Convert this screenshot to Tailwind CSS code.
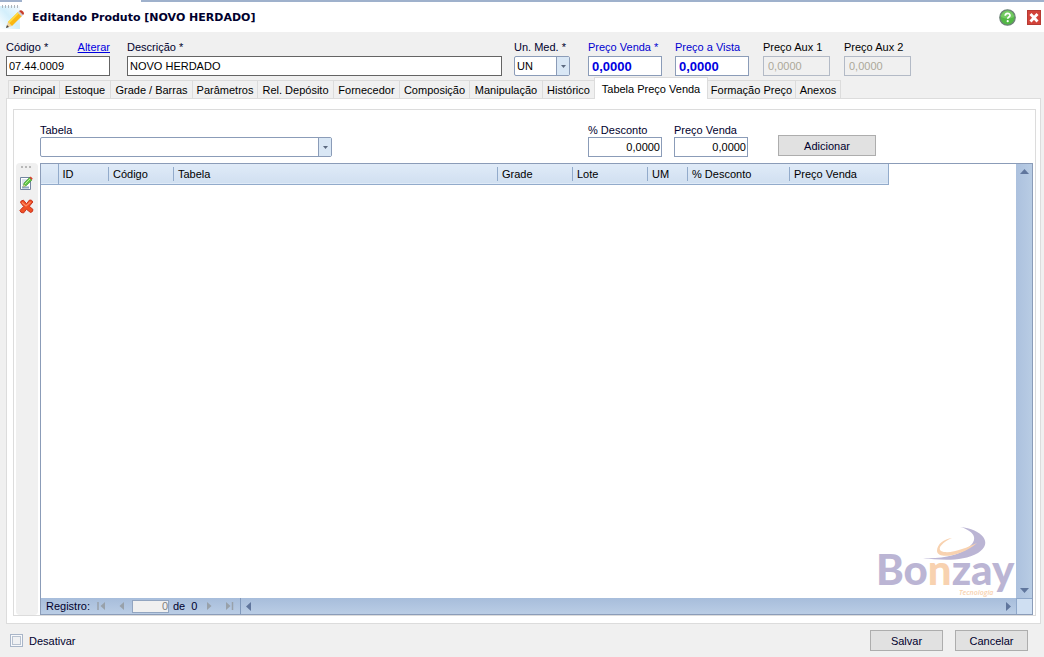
<!DOCTYPE html>
<html lang="pt-BR">
<head>
<meta charset="utf-8">
<title>Editando Produto</title>
<script src="https://cdn.jsdelivr.net/npm/@tailwindcss/browser@4"></script>
</head>
<body class="flex min-h-screen flex-col bg-[#f0f0f0] font-['Liberation_Sans',Arial,sans-serif] text-[11px] leading-[14px] text-[#00002d]">
  <div class="flex h-[2px] shrink-0 bg-[#9fb1cc]"><div class="ml-[22px] w-[119px] bg-white"></div></div>
  <header class="flex h-[30px] shrink-0 items-center bg-white pr-[3px]">
    <svg class="h-[30px] w-[32px] shrink-0" viewBox="0 0 32 30" aria-hidden="true">
      <defs><linearGradient id="sky" x1="0" y1="1" x2="1" y2="0"><stop offset="0" stop-color="#fff"/><stop offset=".5" stop-color="#d3effb"/><stop offset="1" stop-color="#f4fbff"/></linearGradient></defs>
      <rect y="4" width="20" height="23" fill="url(#sky)"/>
      <path d="M2.500 3v3M5.500 3v3M8.500 3v3M11.500 3v3M14.500 3v3M17.500 3v3" stroke="#aeb4ba"/>
      <path d="M6 26l2-6 4 4z" fill="#f0d4a0"/><path d="M6 26l1-3 2 2z" fill="#444"/>
      <path d="M8 20L18 10l4 4-10 10z" fill="#fbb813"/><path d="M8 20L18 10l1.300 1.300-10 10z" fill="#ffdc45"/>
      <path d="M17.500 10.500l1.500-1.500 4 4-1.500 1.500z" fill="#ccd0d4"/><path d="M19 9q2-1.500 4 .5t0 3.500z" fill="#c83d2a"/>
    </svg>
    <h1 class="pt-[2px] font-['DejaVu_Sans',Verdana,sans-serif] text-[11px] font-bold">Editando Produto [NOVO HERDADO]</h1>
    <div class="ml-auto flex items-center gap-[11px]">
      <button type="button" aria-label="Ajuda"><svg class="block size-[17px]" viewBox="0 0 17 17"><circle cx="8.500" cy="8.500" r="7.700" fill="#52b845" stroke="#6d8078" stroke-width="1.300"/><path d="M2 8a6.500 6.500 0 0 1 13 0q-6 3-13 0z" fill="#8bd577" opacity=".6"/><path d="M6.200 6.800c0-3.200 4.800-3.200 4.800-.4 0 1.600-2.300 1.700-2.300 3.400" fill="none" stroke="#fff" stroke-width="1.700"/><circle cx="8.700" cy="12.200" r="1.100" fill="#fff"/></svg></button>
      <button type="button" aria-label="Fechar"><svg class="block h-[15px] w-[14px]" viewBox="0 0 14 15"><rect x=".5" y=".5" width="13" height="14" fill="#d2433a" stroke="#b63a33"/><path d="M3.500 4l7 7.500M10.500 4l-7 7.500" stroke="#fff" stroke-width="2.800"/></svg></button>
    </div>
  </header>

  <main class="flex grow flex-col px-[6px] pr-[3px] pt-[8px]">
    <div class="flex shrink-0">
      <div class="w-[104px]">
        <div class="flex justify-between"><label for="codigo">Código *</label><a href="#" class="text-[#0000e0] underline">Alterar</a></div>
        <input id="codigo" value="07.44.0009" class="mt-[2px] block h-[20px] w-full border border-[#646464] bg-white px-[2px] text-black">
      </div>
      <div class="ml-[17px] w-[375px]">
        <label for="desc" class="block">Descrição *</label>
        <input id="desc" value="NOVO HERDADO" class="mt-[2px] block h-[20px] w-full border border-[#646464] bg-white px-[2px] text-black">
      </div>
      <div class="ml-[12px] w-[56px]">
        <label for="um" class="block">Un. Med. *</label>
        <div class="relative mt-[2px]">
          <select id="um" class="block h-[20px] w-full appearance-none rounded-[2px] border border-[#8b9cb8] bg-white px-[2px] text-black"><option>UN</option></select>
          <span class="pointer-events-none absolute inset-y-px right-px flex w-[13px] items-center justify-center border-l border-[#8b9cb8] bg-[#d9e7f5]"><svg class="h-[3px] w-[5px]" viewBox="0 0 5 3"><path d="M0 0h5L2.500 3z" fill="#5c6a80"/></svg></span>
        </div>
      </div>
      <div class="ml-[18px] w-[74px]">
        <label for="pv" class="block whitespace-nowrap text-[#0000d0]">Preço Venda *</label>
        <input id="pv" value="0,0000" class="mt-[2px] block h-[20px] w-full border border-[#8b9cb8] bg-white px-[3px] text-[13px] font-bold text-[#0000e0]">
      </div>
      <div class="ml-[13px] w-[74px]">
        <label for="pav" class="block text-[#0000d0]">Preço a Vista</label>
        <input id="pav" value="0,0000" class="mt-[2px] block h-[20px] w-full border border-[#8b9cb8] bg-white px-[3px] text-[13px] font-bold text-[#0000e0]">
      </div>
      <div class="ml-[14px] w-[67px]">
        <label for="a1" class="block text-black">Preço Aux 1</label>
        <input id="a1" disabled value="0,0000" class="mt-[2px] block h-[20px] w-full border border-[#b3bac6] bg-[#f0f0f0] px-[4px] text-[#aca899]">
      </div>
      <div class="ml-[14px] w-[67px]">
        <label for="a2" class="block text-black">Preço Aux 2</label>
        <input id="a2" disabled value="0,0000" class="mt-[2px] block h-[20px] w-full border border-[#b3bac6] bg-[#f0f0f0] px-[4px] text-[#aca899]">
      </div>
    </div>

    <div role="tablist" class="mb-[-1px] ml-[2px] mt-px flex h-[22px] shrink-0 items-end text-black">
      <button role="tab" class="h-[19px] w-[51px] border-l border-t border-[#dcdcdc]">Principal</button>
      <button role="tab" class="h-[19px] w-[51px] border-l border-t border-[#dcdcdc]">Estoque</button>
      <button role="tab" class="h-[19px] w-[82px] border-l border-t border-[#dcdcdc]">Grade / Barras</button>
      <button role="tab" class="h-[19px] w-[65px] border-l border-t border-[#dcdcdc]">Parâmetros</button>
      <button role="tab" class="h-[19px] w-[76px] border-l border-t border-[#dcdcdc]">Rel. Depósito</button>
      <button role="tab" class="h-[19px] w-[66px] border-l border-t border-[#dcdcdc]">Fornecedor</button>
      <button role="tab" class="h-[19px] w-[70px] border-l border-t border-[#dcdcdc]">Composição</button>
      <button role="tab" class="h-[19px] w-[73px] border-l border-t border-[#dcdcdc]">Manipulação</button>
      <button role="tab" class="h-[19px] w-[52px] border-l border-t border-[#dcdcdc]">Histórico</button>
      <button role="tab" aria-selected="true" class="z-10 h-[22px] w-[114px] border border-b-0 border-[#dcdcdc] bg-white">Tabela Preço Venda</button>
      <button role="tab" class="h-[19px] w-[87px] border-t border-[#dcdcdc]">Formação Preço</button>
      <button role="tab" class="h-[19px] w-[46px] border-x border-t border-[#dcdcdc]">Anexos</button>
    </div>

    <section class="flex grow flex-col border border-[#dcdcdc] bg-white px-[6px] pb-[7px] pr-[4px] pt-[10px]">
      <div class="flex grow flex-col border border-[#dcdcdc] pl-[2px] pr-[2px] pt-[13px]">
        <form class="flex h-[40px] shrink-0 pl-[24px]">
          <div class="w-[292px]">
            <label for="tabela" class="block">Tabela</label>
            <div class="relative">
              <select id="tabela" class="block h-[20px] w-full appearance-none rounded-[2px] border border-[#8b9cb8] bg-white px-[2px] text-black"><option></option></select>
              <span class="pointer-events-none absolute inset-y-px right-px flex w-[13px] items-center justify-center border-l border-[#8b9cb8] bg-[#d9e7f5]"><svg class="h-[3px] w-[5px]" viewBox="0 0 5 3"><path d="M0 0h5L2.500 3z" fill="#5c6a80"/></svg></span>
            </div>
          </div>
          <div class="ml-[256px] w-[74px]">
            <label for="pd" class="block">% Desconto</label>
            <input id="pd" value="0,0000" class="block h-[20px] w-full border border-[#8b9cb8] bg-white px-px text-right text-black">
          </div>
          <div class="ml-[12px] w-[74px]">
            <label for="pv2" class="block">Preço Venda</label>
            <input id="pv2" value="0,0000" class="block h-[20px] w-full border border-[#8b9cb8] bg-white px-px text-right text-black">
          </div>
          <button type="button" class="ml-[30px] mt-[12px] h-[21px] w-[98px] border border-[#adadad] bg-[#e1e1e1]">Adicionar</button>
        </form>
        <div class="flex grow gap-[2px]">
          <div role="toolbar" class="flex w-[22px] shrink-0 flex-col items-center rounded bg-[#f0f0f0] pr-[2px] pt-[3px]">
            <svg class="h-[2px] w-[10px]" viewBox="0 0 10 2"><path d="M0 1h2M4 1h2M8 1h2" stroke="#b8b8b8" stroke-width="2"/></svg>
            <button type="button" aria-label="Editar" class="mt-[8px]"><svg class="block size-[14px]" viewBox="0 0 14 14"><path d="M1.500 1.500h10v12h-10z" fill="#fff" stroke="#7385a0"/><path d="M3 4h5M3 6h4M3 8h3" stroke="#b8c7da"/><path d="M3 11.500h7" stroke="#91a7c4" stroke-width="2"/><path d="M4 11l1-4 5.500-5.500 2.500 2.500L7.500 9.500z" fill="#5fc447" stroke="#3f8f39" stroke-width=".6"/><path d="M6 8l5-5" stroke="#b7ef91"/><path d="M10.500 1.500l1.200-1 2 2-1 1.500z" fill="#d8432e"/><path d="M4 11l.8-2.500 1.700 1.500z" fill="#f1d5a7"/></svg></button>
            <button type="button" aria-label="Excluir" class="mt-[9px]"><svg class="block size-[15px]" viewBox="0 0 15 15"><path d="M1.500 3.500Q1.500 1.500 4.500 1.200L7.500 4.800 10.500 1Q13 .5 13.800 3L10.300 7.300 14 10.500Q14 13 11.500 13.500L7.500 10.300 4.500 14Q1.500 14 .9 11.500L4.700 7.500z" fill="#ef5026" stroke="#c9321c" stroke-linejoin="round"/><path d="M3 3.500L7 7l4.500-4" fill="none" stroke="#ff8a62" stroke-width="1.200"/></svg></button>
          </div>
          <div class="relative flex grow flex-col border border-[#8b9cb8]">
            <div class="flex grow">
              <div class="grow">
                <table class="w-[847px] table-fixed border-collapse text-left text-black">
                  <colgroup><col class="w-[17px]"><col class="w-[50px]"><col class="w-[65px]"><col class="w-[324px]"><col class="w-[75px]"><col class="w-[75px]"><col class="w-[40px]"><col class="w-[102px]"><col class="w-[99px]"></colgroup>
                  <thead><tr class="h-[20px] border-b border-r border-[#92abcb] bg-linear-to-b from-[#e0ebf8] to-[#d1e0f1]">
                    <th class="p-0"></th>
                    <th class="border-l border-[#92abcb] p-0 pl-[4px] font-normal">ID</th>
                    <th class="p-0 font-normal"><div class="border-l border-[#92abcb] pl-[4px]">Código</div></th>
                    <th class="p-0 font-normal"><div class="border-l border-[#92abcb] pl-[4px]">Tabela</div></th>
                    <th class="p-0 font-normal"><div class="border-l border-[#92abcb] pl-[4px]">Grade</div></th>
                    <th class="p-0 font-normal"><div class="border-l border-[#92abcb] pl-[4px]">Lote</div></th>
                    <th class="p-0 font-normal"><div class="border-l border-[#92abcb] pl-[4px]">UM</div></th>
                    <th class="p-0 font-normal"><div class="border-l border-[#92abcb] pl-[4px]">% Desconto</div></th>
                    <th class="p-0 font-normal"><div class="border-l border-[#92abcb] pl-[4px]">Preço Venda</div></th>
                  </tr></thead>
                </table>
              </div>
              <div class="flex w-[16px] flex-col items-center justify-between bg-linear-to-r from-[#acc1de] to-[#b8cce4] py-[5px]">
                <svg class="h-[5px] w-[9px]" viewBox="0 0 9 5"><path d="M0 5h9L4.500 0z" fill="#60769d"/></svg>
                <svg class="h-[5px] w-[9px]" viewBox="0 0 9 5"><path d="M0 0h9L4.500 5z" fill="#60769d"/></svg>
              </div>
            </div>
            <div class="flex h-[16px] shrink-0 items-center bg-linear-to-b from-[#a7bddb] to-[#bacde5]">
              <div class="flex h-full w-[200px] items-center border-r border-[#8199bb] pl-[5px]">
                <label for="reg" class="w-[51px]">Registro:</label>
                <svg class="h-[8px] w-[30px]" viewBox="0 0 30 8"><path d="M1 0v8" stroke="#98a1aa" stroke-width="1.500"/><path d="M8 0v8L3.500 4zM27 0v8l-4.500-4z" fill="#98a1aa"/></svg>
                <input id="reg" disabled value="0" class="ml-[5px] h-[13px] w-[37px] border border-[#92a5c0] bg-[#f0f0f0] text-right text-[#808080]">
                <span class="ml-[4px] whitespace-pre">de  0</span>
                <svg class="ml-[10px] h-[8px] w-[28px]" viewBox="0 0 28 8"><path d="M0 0v8l4.500-4zM19 0v8l4.500-4z" fill="#98a1aa"/><path d="M25.500 0v8" stroke="#98a1aa" stroke-width="1.500"/></svg>
              </div>
              <div class="flex grow items-center justify-between px-[5px]">
                <svg class="h-[9px] w-[5px]" viewBox="0 0 5 9"><path d="M5 0v9L0 4.500z" fill="#60769d"/></svg>
                <svg class="h-[9px] w-[5px]" viewBox="0 0 5 9"><path d="M0 0v9l5-4.500z" fill="#60769d"/></svg>
              </div>
              <div class="h-full w-[16px] border-l border-t border-[#8fa8ca] bg-[#cfdff2]"></div>
            </div>
            <svg class="pointer-events-none absolute bottom-[16px] right-[16px] h-[72px] w-[140px]" viewBox="0 0 140 72" role="img" aria-label="Bonzay Tecnologia">
              <path d="M84 1C106 3 118 17 102 27 86 36 64 34 47 32 67 33 84 29 93 21 104 12 96 4 84 1z" fill="#bbb5d4"/>
              <path d="M76 12C67 16 61 22 65 25 73 29 90 22 101 17 86 30 62 34 61 25 61 18 68 13 76 12z" fill="#f8d2b0"/>
              <text x="0" y="59" font-family="Lato, sans-serif" font-weight="900" font-size="42" fill="#bbb5d4">Bo<tspan fill="#f8d2b0">n</tspan>zay</text>
              <text x="83" y="69" font-family="Open Sans, sans-serif" font-style="italic" font-weight="600" font-size="7" fill="#f8d2b0">Tecnologia</text>
            </svg>
          </div>
        </div>
      </div>
    </section>

    <footer class="flex h-[33px] shrink-0 items-center pl-[4px] pr-[13px]">
      <label class="flex items-center gap-[6px]"><input type="checkbox" class="size-[13px] appearance-none border border-[#a8b5c8] bg-[#f0f1f3] shadow-[inset_0_0_0_1px_#f8f9fb,inset_0_0_0_2px_#b8c2d0]">Desativar</label>
      <button type="button" class="ml-auto h-[21px] w-[73px] border border-[#adadad] bg-[#e1e1e1]">Salvar</button>
      <button type="button" class="ml-[12px] h-[21px] w-[73px] border border-[#adadad] bg-[#e1e1e1]">Cancelar</button>
    </footer>
  </main>
</body>
</html>
